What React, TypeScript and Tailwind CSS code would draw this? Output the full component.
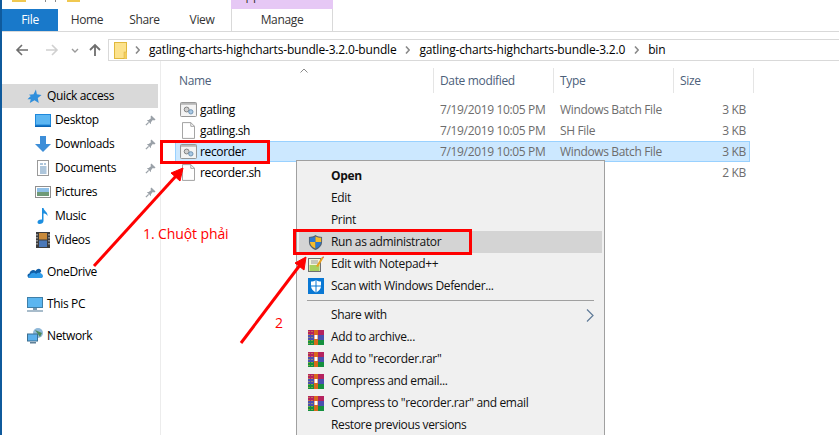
import type { ReactNode } from "react";

const FONT = "font-['Open_Sans','Noto_Sans',sans-serif]";

function FolderIcon() {
  return (
    <svg width="13" height="17" viewBox="0 0 13 17">
      <rect x="0.5" y="0.5" width="12" height="16" fill="#fce28c" stroke="#e0b83c" />
      <rect x="10" y="10" width="3" height="7" fill="#f5cf5e" stroke="#d8b040" strokeWidth="0.5" />
    </svg>
  );
}

function Pin() {
  return (
    <svg width="11" height="11" viewBox="0 0 12 12">
      <path d="M7 0.5 L11.5 5 L10 6 L8.5 5.5 L6.5 8 L6.5 10 L2 5.5 L4 5.5 L6.5 3.5 L6 2 Z" fill="#9aa1a8" />
      <path d="M4 8 L1 11" stroke="#9aa1a8" strokeWidth="1.4" />
    </svg>
  );
}

function BatIcon() {
  return (
    <svg width="17" height="15" viewBox="0 0 18 16">
      <rect x="0.5" y="0.5" width="17" height="15" rx="1" fill="#f4f4f4" stroke="#8d8d8d" />
      <rect x="1" y="1" width="16" height="2" fill="#b8b8b8" />
      <circle cx="7" cy="8" r="2.6" fill="#d0d0d0" stroke="#7d7d7d" />
      <circle cx="11.5" cy="10.5" r="2.3" fill="#a9c8e4" stroke="#6a8fb0" />
    </svg>
  );
}

function DocIcon() {
  return (
    <svg width="13" height="17" viewBox="0 0 14 18">
      <path d="M0.5 0.5 H9.5 L13.5 4.5 V17.5 H0.5 Z" fill="#fff" stroke="#9a9a9a" />
      <path d="M9.5 0.5 V4.5 H13.5" fill="none" stroke="#9a9a9a" />
    </svg>
  );
}

function NavIcon({ name }: { name: string }) {
  if (name === "Quick access")
    return (
      <svg width="15" height="15" viewBox="0 0 16 16">
        <path d="M9.5 0.5 L10.5 5.5 L15.5 6.5 L11.5 9.5 L12.5 15 L8 12 L3 15 L4 11 L0.5 11 L4 7.5 L2 6 L7 5.5 Z" fill="#2f8fdc" />
      </svg>
    );
  if (name === "Desktop")
    return (
      <svg width="16" height="13" viewBox="0 0 16 13">
        <rect width="16" height="12" fill="#1e88dc" />
        <rect x="1" y="1" width="14" height="9.5" fill="#5cb6f2" />
        <rect y="11.5" width="16" height="1.5" fill="#0a64b4" />
      </svg>
    );
  if (name === "Downloads")
    return (
      <svg width="16" height="16" viewBox="0 0 16 16">
        <path d="M5 0 H11 V8 H16 L8 16 L0 8 H5 Z" fill="#3d8ed8" />
      </svg>
    );
  if (name === "Documents")
    return (
      <svg width="12" height="16" viewBox="0 0 12 16">
        <rect x="0.5" y="0.5" width="11" height="15" fill="#fff" stroke="#9a9a9a" />
        <path d="M3 4 H6 M7 4 H9 M3 7 H9.5 M3 9 H9.5 M3 11 H9.5 M3 13 H9.5" stroke="#5c8db8" />
      </svg>
    );
  if (name === "Pictures")
    return (
      <svg width="16" height="12" viewBox="0 0 16 12">
        <rect x="0.5" y="0.5" width="15" height="11" fill="#fff" stroke="#8f8f8f" />
        <rect x="2" y="2" width="12" height="4" fill="#8fc0e8" />
        <rect x="2" y="6" width="12" height="4" fill="#6f9a78" />
      </svg>
    );
  if (name === "Music")
    return (
      <svg width="12" height="16" viewBox="0 0 12 16">
        <path d="M5 0 H6.5 C7 3 11 4 10.5 8 C9.5 6 8 5.5 6.5 5.5 V13 C6.5 15 4.5 16 2.5 16 C1 16 0.5 15 0.5 14 C0.5 12.5 2.5 11 5 11.5 Z" fill="#1c8ee0" />
      </svg>
    );
  if (name === "Videos")
    return (
      <svg width="14" height="16" viewBox="0 0 14 16">
        <rect width="14" height="16" fill="#3c3c3c" />
        <rect x="3" y="1" width="8" height="6.5" fill="#c88a3a" />
        <rect x="3" y="8.5" width="8" height="6.5" fill="#4a78b8" />
        <path d="M1 2 V14 M13 2 V14" stroke="#ddd" strokeWidth="1" strokeDasharray="1.5 1.5" />
      </svg>
    );
  if (name === "OneDrive")
    return (
      <svg width="16" height="11" viewBox="0 0 16 11">
        <path d="M3 11 C0 11 -0.5 7 2.5 6.5 C3 3 7 2 8.5 4 C11 0 15 2 14 5 L6 11 Z" fill="#0f5fa8" />
        <path d="M3 11 C1 11 1 8.5 3 8 C4 5.5 8 5 9 7 C11 4.5 16 6 16 9 C16 10.5 15 11 14 11 Z" fill="#2f9be8" />
      </svg>
    );
  if (name === "This PC")
    return (
      <svg width="16" height="15" viewBox="0 0 16 15">
        <rect x="0.5" y="0.5" width="15" height="10" fill="#5bb6f0" stroke="#3f7fa8" />
        <rect x="6" y="11" width="4" height="2" fill="#7a9ab0" />
        <rect y="13" width="16" height="2" fill="#a8bccb" />
      </svg>
    );
  return (
    <svg width="16" height="16" viewBox="0 0 16 16">
      <circle cx="11" cy="5" r="5" fill="#8fb8d8" />
      <path d="M8 2 L13 9 L15 5 Z" fill="#4f8a5c" />
      <rect x="0.5" y="6" width="10" height="7" fill="#5bb0ec" stroke="#3c6f90" />
      <rect x="3" y="14" width="6" height="1.5" fill="#5f8098" />
    </svg>
  );
}

function Shield() {
  return (
    <svg width="15" height="17" viewBox="0 0 16 17">
      <path d="M8 0.5 C10 2 13 2.5 15 2.5 V8 C15 12 12 15 8 16.5 C4 15 1 12 1 8 V2.5 C3 2.5 6 2 8 0.5 Z" fill="#54606e" />
      <path d="M8 2 V8 H2 V3.5 C4 3.5 6.5 3 8 2 Z" fill="#2b78d0" />
      <path d="M8 2 C9.5 3 12 3.5 14 3.5 V8 H8 Z" fill="#f6bc2a" />
      <path d="M2 8 H8 V15 C5 14 2.5 11.5 2 8 Z" fill="#f6bc2a" />
      <path d="M8 8 H14 C13.5 11.5 11 14 8 15 Z" fill="#2b78d0" />
    </svg>
  );
}

function NotepadIcon() {
  return (
    <svg width="16" height="16" viewBox="0 0 16 16">
      <rect x="0.5" y="2.5" width="12" height="13" fill="#f4f6dc" stroke="#707070" />
      <rect x="1.5" y="9" width="10" height="6" fill="#a8d060" />
      <path d="M3 5 H10 M3 7 H10" stroke="#9a9a9a" />
      <path d="M8 10 L14 1 L15.5 2 L10 11 Z" fill="#e8a020" />
      <path d="M14 1 L15.5 2 L16 0.5 Z" fill="#d02020" />
    </svg>
  );
}

function DefenderIcon() {
  return (
    <svg width="16" height="16" viewBox="0 0 16 16">
      <rect width="16" height="16" fill="#0a78d4" />
      <path d="M8 2 C9.5 3 11.5 3.5 13 3.5 V8 C13 11 11 13 8 14.5 C5 13 3 11 3 8 V3.5 C4.5 3.5 6.5 3 8 2 Z" fill="#fff" />
      <path d="M7.5 2 H8.5 V14.5 H7.5 Z M3 7.5 H13 V8.5 H3 Z" fill="#0a78d4" />
    </svg>
  );
}

function RarIcon() {
  return (
    <svg width="16" height="15" viewBox="0 0 16 15">
      <rect width="16" height="5" fill="#b5225f" />
      <rect y="5" width="16" height="5" fill="#4b4fb0" />
      <rect y="10" width="16" height="5" fill="#15903f" />
      <path d="M1 1 V14 M4 1 V14" stroke="#d8c040" strokeDasharray="1 2" />
      <rect x="6" width="4" height="15" fill="#d96a1c" />
      <rect x="6.5" y="5" width="3" height="4" fill="#fff" />
    </svg>
  );
}

function NavRow({ name, pin, top }: { name: string; pin?: boolean; top?: boolean }) {
  const indented = ["Desktop", "Downloads", "Documents", "Pictures", "Music", "Videos"].includes(name);
  return (
    <div className={`flex h-6 items-center ${top ? "bg-[#d9d9d9]" : ""} ${indented ? "pl-[28px]" : "pl-[20px]"}`}>
      <span className="flex w-[25px] shrink-0 justify-center">
        <NavIcon name={name} />
      </span>
      <span className="grow text-black">{name}</span>
      {pin && (
        <span className="pr-[2px]">
          <Pin />
        </span>
      )}
    </div>
  );
}

function Crumb({ children }: { children: ReactNode }) {
  return (
    <>
      <svg width="5" height="8" viewBox="0 0 5 8" className="mr-[9px] ml-[9px]">
        <path d="M1 0.5 L4.2 4 L1 7.5" fill="none" stroke="#8a8a8a" strokeWidth="1.6" />
      </svg>
      <span className="whitespace-nowrap text-black">{children}</span>
    </>
  );
}

const files = [
  { name: "gatling", type: "Windows Batch File", size: "3 KB", bat: true },
  { name: "gatling.sh", type: "SH File", size: "3 KB" },
  { name: "recorder", type: "Windows Batch File", size: "3 KB", bat: true, selected: true },
  { name: "recorder.sh", type: "", size: "2 KB" },
];

function MenuRow({ label, icon, bold, active, more }: { label: string; icon?: ReactNode; bold?: boolean; active?: boolean; more?: boolean }) {
  return (
    <div className={`flex h-[22px] items-center ${active ? "bg-[#d4d4d4]" : ""}`}>
      <span className="flex w-[32px] shrink-0 justify-center pl-[1px]">{icon}</span>
      <span className={`grow whitespace-nowrap text-[#111] ${bold ? "font-bold" : ""}`}>{label}</span>
      {more && (
        <svg width="8" height="13" viewBox="0 0 8 13" className="mr-[8px]">
          <path d="M1 0.5 L7 6.5 L1 12.5" fill="none" stroke="#5f7a98" strokeWidth="1.2" />
        </svg>
      )}
    </div>
  );
}

function ContextMenu() {
  return (
    <div className="absolute top-[160px] left-[296px] h-[290px] w-[309px] border border-[#a0a0a0] bg-[#f0f0f0] pt-[4px] pr-[2px] pl-[2px]">
      <MenuRow label="Open" bold />
      <MenuRow label="Edit" />
      <MenuRow label="Print" />
      <MenuRow label="Run as administrator" icon={<Shield />} active />
      <MenuRow label="Edit with Notepad++" icon={<NotepadIcon />} />
      <MenuRow label="Scan with Windows Defender..." icon={<DefenderIcon />} />
      <div className="my-[3px] mr-[8px] ml-[8px] h-px bg-[#a0a0a0]" />
      <MenuRow label="Share with" more />
      <MenuRow label="Add to archive..." icon={<RarIcon />} />
      <MenuRow label={'Add to "recorder.rar"'} icon={<RarIcon />} />
      <MenuRow label="Compress and email..." icon={<RarIcon />} />
      <MenuRow label={'Compress to "recorder.rar" and email'} icon={<RarIcon />} />
      <MenuRow label="Restore previous versions" />
    </div>
  );
}

function Annotations() {
  return (
    <>
      <div className="absolute top-[140px] left-[160px] h-[24px] w-[110px] border-[3px] border-[#ff0000]" />
      <div className="absolute top-[229px] left-[293px] h-[26px] w-[179px] border-[3px] border-[#ff0000]" />
      <svg width="839" height="435" viewBox="0 0 839 435" className="absolute top-0 left-0">
        <path d="M94 266 L176 176" stroke="#ff0000" strokeWidth="3" />
        <path d="M183 168 L180 181 L171 173 Z" fill="#ff0000" stroke="#ff0000" />
        <path d="M241 343 L300 265" stroke="#ff0000" strokeWidth="3" />
        <path d="M306 257 L304 270 L295 263 Z" fill="#ff0000" stroke="#ff0000" />
      </svg>
      <span className="absolute top-[225px] left-[143px] text-[14px] leading-[18px] tracking-[-0.1px] text-[#ff0000]">1. Chuột phải</span>
      <span className="absolute top-[314px] left-[275px] text-[14px] leading-[18px] tracking-normal text-[#ff0000]">2</span>
    </>
  );
}

export default function App() {
  return (
    <div className={`relative h-[435px] w-[839px] overflow-hidden border-l-2 border-[#0f5a9c] bg-white text-[12px] tracking-[-0.35px] ${FONT}`}>
      <div className="flex h-[9px] overflow-hidden">
        <div className="ml-[10px] h-[2px] w-[14px] bg-[#f0c850]" />
        <div className="ml-[19px] h-[2px] w-[11px] border-x border-[#8a8a8a]" />
        <div className="ml-[11px] h-[2px] w-[13px] bg-[#f0c850]" />
        <div className="ml-[151px] h-[9px] w-[102px] overflow-hidden bg-[#e6c8f5] pl-[7px]">
          <div className="-mt-[10px] leading-[12px] tracking-normal whitespace-nowrap text-[#333]">Application Tools</div>
        </div>
      </div>
      <div className="flex h-[23px] items-stretch border-b border-[#d9d9d9]">
        <div className="flex w-[56px] items-center justify-center bg-[#1979ca] text-white">File</div>
        <div className="flex w-[58px] items-center justify-center text-[#333]">Home</div>
        <div className="flex w-[57px] items-center justify-center text-[#333]">Share</div>
        <div className="flex w-[58px] items-center justify-center text-[#333]">View</div>
        <div className="flex w-[102px] items-center justify-center border-x border-[#d9d9d9] bg-white text-[#333]">Manage</div>
      </div>
      <div className="flex h-[29px] items-end">
        <div className="flex h-[22px] w-[106px] items-center pl-[13px]">
          <svg width="90" height="14" viewBox="0 0 90 14">
            <path d="M13 7 H2 M7 2 L2 7 L7 12" fill="none" stroke="#6e6e6e" strokeWidth="1.6" />
            <path d="M31 7 H42 M37 2 L42 7 L37 12" fill="none" stroke="#d0d0d0" strokeWidth="1.6" />
            <path d="M57 6 L60 9 L63 6" fill="none" stroke="#9a9a9a" strokeWidth="1.4" />
            <path d="M80 13 V2 M75 7 L80 2 L85 7" fill="none" stroke="#6e6e6e" strokeWidth="1.8" />
          </svg>
        </div>
        <div className="flex h-[22px] grow items-center border-y border-l border-[#d9d9d9] pl-[5px] tracking-[-0.18px]">
          <span className="-mr-[1px] flex">
            <FolderIcon />
          </span>
          <Crumb>gatling-charts-highcharts-bundle-3.2.0-bundle</Crumb>
          <Crumb>gatling-charts-highcharts-bundle-3.2.0</Crumb>
          <Crumb>bin</Crumb>
        </div>
      </div>
      <div className="flex h-[374px]">
        <div className="h-full w-[159px] shrink-0 border-r border-[#ececec] pt-[23px] pr-[2px]">
          <NavRow name="Quick access" top />
          <NavRow name="Desktop" pin />
          <NavRow name="Downloads" pin />
          <NavRow name="Documents" pin />
          <NavRow name="Pictures" pin />
          <NavRow name="Music" />
          <NavRow name="Videos" />
          <div className="h-2" />
          <NavRow name="OneDrive" />
          <div className="h-2" />
          <NavRow name="This PC" />
          <div className="h-2" />
          <NavRow name="Network" />
        </div>
        <div className="grow pt-[7px] pl-[14px]">
          <div className="grid h-[25px] w-[579px] grid-cols-[259px_120px_120px_80px] text-[#4c607a]">
            <div className="relative flex items-center border-r border-[#e5e5e5] pl-[4px]">
              Name
              <svg width="8" height="5" viewBox="0 0 8 5" className="absolute top-0 left-[125px]">
                <path d="M0.5 4.5 L4 1 L7.5 4.5" fill="none" stroke="#8a8a8a" />
              </svg>
            </div>
            <div className="flex items-center border-r border-[#e5e5e5] pl-[6px]">Date modified</div>
            <div className="flex items-center border-r border-[#e5e5e5] pl-[6px]">Type</div>
            <div className="flex items-center border-r border-[#e5e5e5] pl-[6px]">Size</div>
          </div>
          <div className="pt-[6px]">
            {files.map((f) => (
              <div key={f.name} className={`grid h-[21px] w-[575px] grid-cols-[259px_120px_120px_74px] items-center border ${f.selected ? "border-[#99d1ff] bg-[#cce8ff]" : "border-transparent"}`}>
                <div className="flex items-center pl-[2px] text-black">
                  <span className="flex w-[20px] justify-center">{f.bat ? <BatIcon /> : <DocIcon />}</span>
                  <span className="pl-[2px]">{f.name}</span>
                </div>
                <div className="pl-[5px] text-[#6d6d6d]">7/19/2019 10:05 PM</div>
                <div className="pl-[5px] text-[#6d6d6d]">{f.type}</div>
                <div className="pr-[3px] text-right text-[#6d6d6d]">{f.size}</div>
              </div>
            ))}
          </div>
        </div>
      </div>
      <div className="absolute top-0 left-[-2px] h-[435px] w-[839px]">
        <ContextMenu />
        <Annotations />
      </div>
    </div>
  );
}
